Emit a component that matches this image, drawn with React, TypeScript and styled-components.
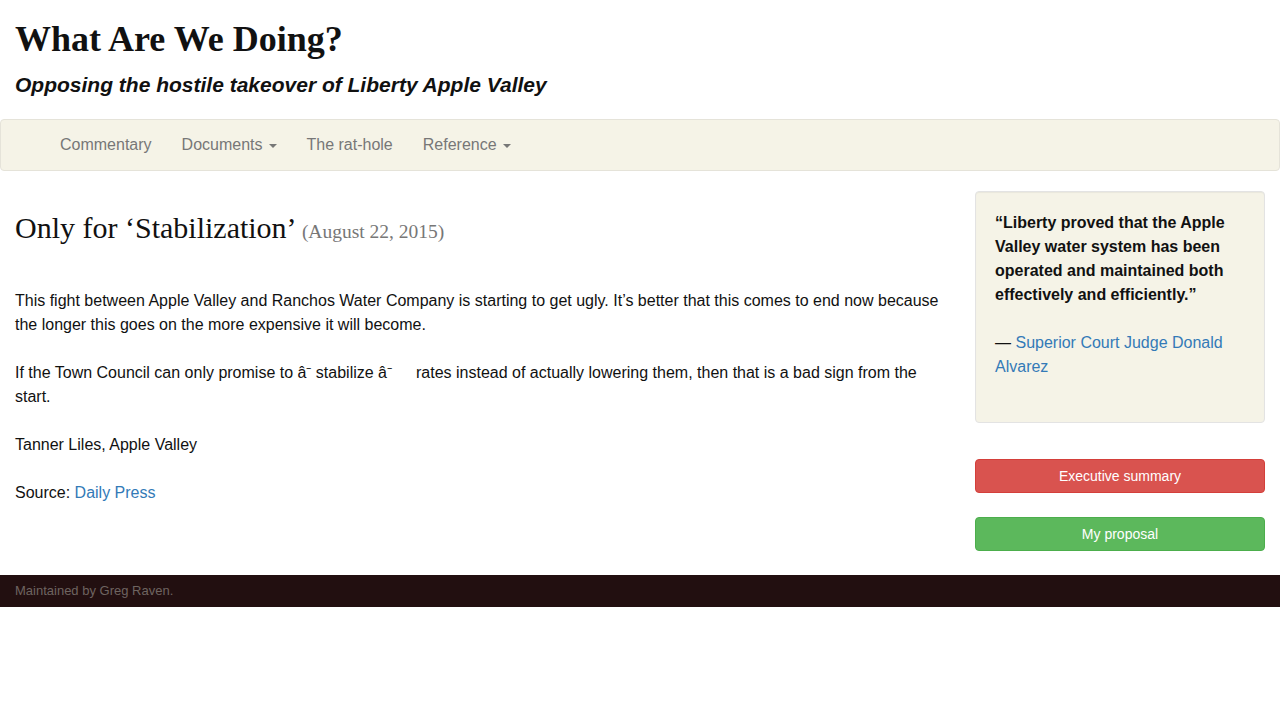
import styled, { createGlobalStyle } from 'styled-components';

const GlobalStyle = createGlobalStyle`
  html, body {
    margin: 0;
    padding: 0;
    background: #fff;
  }
  body {
    font-family: "Liberation Sans", Arial, Helvetica, sans-serif;
    font-size: 16px;
    line-height: 1.5;
    color: #111;
  }
  * {
    box-sizing: border-box;
  }
`;

const Header = styled.header`
  padding: 0 15px;
`;

const SiteTitle = styled.h1`
  font-family: "Liberation Serif", "Times New Roman", serif;
  font-size: 36px;
  font-weight: 700;
  line-height: 1.1;
  margin: 20px 0 0;
  color: #111;
`;

const Tagline = styled.h2`
  font-family: "Liberation Sans", Arial, sans-serif;
  font-size: 21px;
  font-style: italic;
  font-weight: 700;
  line-height: 1.1;
  margin: 13px 0 0;
  color: #111;
`;

const Navbar = styled.nav`
  margin-top: 23px;
  min-height: 52px;
  background: #f5f3e7;
  border: 1px solid #e5e3d9;
  border-radius: 4px;
  padding-left: 44px;
  display: flex;
  align-items: stretch;
`;

const NavLink = styled.a`
  display: flex;
  align-items: center;
  padding: 0 15px;
  color: #777;
  font-size: 16px;
  text-decoration: none;
  cursor: pointer;
`;

const Caret = styled.span`
  display: inline-block;
  width: 0;
  height: 0;
  margin-left: 6px;
  margin-top: 2px;
  border-top: 4px solid #777;
  border-left: 4px solid transparent;
  border-right: 4px solid transparent;
`;

const Row = styled.div`
  display: grid;
  grid-template-columns: 75% 25%;
  margin-top: 20px;
`;

const Main = styled.main`
  padding: 0 15px;
`;

const PostTitle = styled.h2`
  font-family: "Liberation Serif", "Times New Roman", serif;
  font-size: 30px;
  font-weight: 400;
  line-height: 1.1;
  margin: 20px 0 45px;
  color: #111;
`;

const PostDate = styled.small`
  font-size: 65%;
  color: #777;
`;

const Para = styled.p`
  margin: 0 0 24px;
`;

const Link = styled.a`
  color: #337ab7;
  text-decoration: none;
`;

const Sidebar = styled.aside`
  padding: 0 15px;
  display: flex;
  flex-direction: column;
`;

const Well = styled.div`
  background: #f5f3e7;
  border: 1px solid #e3e3e3;
  border-radius: 4px;
  padding: 19px;
  box-shadow: inset 0 1px 1px rgba(0, 0, 0, 0.05);
  margin-bottom: 36px;
`;

const Quote = styled.p`
  margin: 0 0 24px;
  font-weight: 700;
`;

const Button = styled.a<{ $variant: 'danger' | 'success' }>`
  display: block;
  text-align: center;
  font-size: 14px;
  line-height: 20px;
  padding: 6px 12px;
  border-radius: 4px;
  border: 1px solid;
  color: #fff;
  text-decoration: none;
  margin-bottom: 24px;
  background: ${p => (p.$variant === 'danger' ? '#d9534f' : '#5cb85c')};
  border-color: ${p => (p.$variant === 'danger' ? '#d43f3a' : '#4cae4c')};
`;

const Footer = styled.footer`
  background: #220f10;
  height: 32px;
  padding: 0 15px;
  display: flex;
  align-items: center;
  font-size: 13px;
  color: #6e6460;
`;

export default function App() {
  return (
    <>
      <GlobalStyle />
      <Header>
        <SiteTitle>What Are We Doing?</SiteTitle>
        <Tagline>Opposing the hostile takeover of Liberty Apple Valley</Tagline>
      </Header>
      <Navbar>
        <NavLink>Commentary</NavLink>
        <NavLink>
          Documents<Caret />
        </NavLink>
        <NavLink>The rat-hole</NavLink>
        <NavLink>
          Reference<Caret />
        </NavLink>
      </Navbar>
      <Row>
        <Main>
          <PostTitle>
            Only for ‘Stabilization’ <PostDate>(August 22, 2015)</PostDate>
          </PostTitle>
          <Para>
            This fight between Apple Valley and Ranchos Water Company is starting to get ugly. It’s better
            that this comes to end now because the longer this goes on the more expensive it will become.
          </Para>
          <Para>
            If the Town Council can only promise to {'â⁻ stabilize â⁻\u2003\u2002rates'} instead of actually
            lowering them, then that is a bad sign from the start.
          </Para>
          <Para>Tanner Liles, Apple Valley</Para>
          <Para>
            Source: <Link>Daily Press</Link>
          </Para>
        </Main>
        <Sidebar>
          <Well>
            <Quote>
              “Liberty proved that the Apple Valley water system has been operated and maintained both
              effectively and efficiently.”
            </Quote>
            <Para>
              — <Link>Superior Court Judge Donald Alvarez</Link>
            </Para>
          </Well>
          <Button $variant="danger">Executive summary</Button>
          <Button $variant="success">My proposal</Button>
        </Sidebar>
      </Row>
      <Footer>Maintained by Greg Raven.</Footer>
    </>
  );
}
